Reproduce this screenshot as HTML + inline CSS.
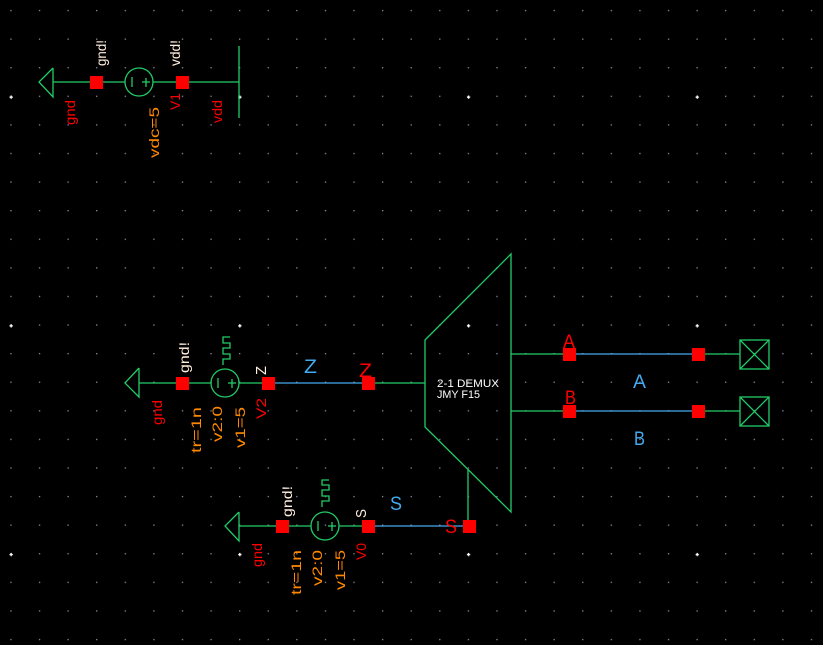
<!DOCTYPE html>
<html><head><meta charset="utf-8"><style>
html,body{margin:0;padding:0;background:#000;overflow:hidden}
svg{display:block}
text{font-family:"Liberation Sans",sans-serif}
</style></head><body>
<svg width="823" height="645" viewBox="0 0 823 645" xmlns="http://www.w3.org/2000/svg">
<defs>
<pattern id="g" x="10.3" y="9.9" width="28.59" height="28.59" patternUnits="userSpaceOnUse">
<rect x="0" y="0" width="1.3" height="1.3" fill="#8a8aaa"/>
</pattern>
<pattern id="G" x="9.5" y="95.5" width="228.7" height="228.7" patternUnits="userSpaceOnUse">
<rect x="1" y="0" width="1.3" height="3.3" fill="#fff"/>
<rect x="0" y="1" width="3.3" height="1.3" fill="#fff"/>
</pattern>
</defs>
<rect width="823" height="645" fill="#000"/>
<rect width="823" height="645" fill="url(#g)"/>
<rect width="823" height="645" fill="url(#G)"/>

<g stroke="#22cc66" stroke-width="1.3" fill="none">
<!-- top -->
<polyline points="53,68 39,82 53,97 53,68"/>
<line x1="53" y1="82" x2="125" y2="82"/>
<line x1="153" y1="82" x2="239" y2="82"/>
<line x1="239" y1="46" x2="239" y2="118"/>
<circle cx="139" cy="82" r="14"/>
<line x1="132" y1="77" x2="132" y2="87"/>
<line x1="146" y1="78" x2="146" y2="87"/>
<line x1="142" y1="82" x2="150" y2="82"/>
<!-- middle -->
<polyline points="139,368 125,383 139,397 139,368"/>
<line x1="139" y1="383" x2="211" y2="383"/>
<line x1="239" y1="383" x2="262" y2="383"/>
<line x1="375" y1="383" x2="425" y2="383"/>
<circle cx="225" cy="383" r="14"/>
<line x1="218" y1="378" x2="218" y2="388"/>
<line x1="232" y1="379" x2="232" y2="388"/>
<line x1="228" y1="383" x2="236" y2="383"/>
<path d="M223,365 V359 H230 V354 H223 V348 H230 V343 H223 V337 H230"/>
<!-- S -->
<polyline points="239,512 225,526 239,541 239,512"/>
<line x1="239" y1="526" x2="311" y2="526"/>
<line x1="339" y1="526" x2="362" y2="526"/>
<line x1="468" y1="470" x2="468" y2="520"/>
<circle cx="325" cy="526" r="14"/>
<line x1="318" y1="521" x2="318" y2="531"/>
<line x1="332" y1="522" x2="332" y2="531"/>
<line x1="328" y1="526" x2="336" y2="526"/>
<path d="M322,507 V501 H329 V496 H322 V490 H329 V485 H322 V480 H329"/>
<!-- demux -->
<polygon points="425,340 511,254 511,512 425,427"/>
<line x1="511" y1="354" x2="563" y2="354"/>
<line x1="704" y1="354" x2="740" y2="354"/>
<line x1="511" y1="411" x2="563" y2="411"/>
<line x1="704" y1="411" x2="740" y2="411"/>
<rect x="740" y="340" width="29" height="29"/>
<line x1="740" y1="340" x2="769" y2="369"/><line x1="769" y1="340" x2="740" y2="369"/>
<rect x="740" y="397" width="29" height="29"/>
<line x1="740" y1="397" x2="769" y2="426"/><line x1="769" y1="397" x2="740" y2="426"/>
</g>
<g stroke="#44aaee" stroke-width="1.3">
<line x1="275" y1="383" x2="362" y2="383"/>
<line x1="375" y1="526" x2="463" y2="526"/>
<line x1="575" y1="354" x2="692" y2="354"/>
<line x1="575" y1="411" x2="692" y2="411"/>
</g>
<g fill="#ff0000">
<rect x="90" y="76" width="13" height="13"/><rect x="176" y="76" width="13" height="13"/>
<rect x="176" y="377" width="13" height="13"/><rect x="262" y="377" width="13" height="13"/><rect x="362" y="377" width="13" height="13"/>
<rect x="276" y="520" width="13" height="13"/><rect x="362" y="520" width="13" height="13"/><rect x="463" y="520" width="13" height="13"/>
<rect x="563" y="348" width="13" height="13"/><rect x="692" y="348" width="13" height="13"/>
<rect x="563" y="405" width="13" height="13"/><rect x="692" y="405" width="13" height="13"/>
</g>

<g font-size="14">
<text fill="#ffeedd" transform="translate(106,66) rotate(-90)" textLength="26" lengthAdjust="spacingAndGlyphs">gnd!</text>
<text fill="#ffeedd" transform="translate(180,66) rotate(-90)" textLength="26" lengthAdjust="spacingAndGlyphs">vdd!</text>
<text fill="#ff0000" transform="translate(75,125) rotate(-90)" textLength="25" lengthAdjust="spacingAndGlyphs">gnd</text>
<text fill="#ff8800" transform="translate(159,158) rotate(-90)" textLength="51" lengthAdjust="spacingAndGlyphs">vdc=5</text>
<text fill="#ff0000" transform="translate(180,110) rotate(-90)" textLength="17" lengthAdjust="spacingAndGlyphs">V1</text>
<text fill="#ff0000" transform="translate(222,123) rotate(-90)" textLength="23" lengthAdjust="spacingAndGlyphs">vdd</text>
<text fill="#ffeedd" transform="translate(189,373) rotate(-90)" textLength="31" lengthAdjust="spacingAndGlyphs">gnd!</text>
<text fill="#ffeedd" transform="translate(266,375) rotate(-90)" font-size="15" textLength="9" lengthAdjust="spacingAndGlyphs">Z</text>
<text fill="#44aaee" x="304" y="373" font-size="19" textLength="13" lengthAdjust="spacingAndGlyphs">Z</text>
<text fill="#ff0000" x="359" y="377" font-size="19" textLength="13" lengthAdjust="spacingAndGlyphs">Z</text>
<text fill="#ff0000" transform="translate(162,425) rotate(-90)" textLength="25" lengthAdjust="spacingAndGlyphs">gnd</text>
<text fill="#ff8800" transform="translate(201,453) rotate(-90)" textLength="46" lengthAdjust="spacingAndGlyphs">tr=1n</text>
<text fill="#ff8800" transform="translate(222,442) rotate(-90)" textLength="36" lengthAdjust="spacingAndGlyphs">v2:0</text>
<text fill="#ff8800" transform="translate(245,448) rotate(-90)" textLength="41" lengthAdjust="spacingAndGlyphs">v1=5</text>
<text fill="#ff0000" transform="translate(266,419) rotate(-90)" textLength="21" lengthAdjust="spacingAndGlyphs">V2</text>
<text fill="#ffeedd" transform="translate(292,517) rotate(-90)" textLength="31" lengthAdjust="spacingAndGlyphs">gnd!</text>
<text fill="#ffeedd" transform="translate(366,518) rotate(-90)" font-size="15" textLength="9" lengthAdjust="spacingAndGlyphs">S</text>
<text fill="#44aaee" x="390" y="510" font-size="19" textLength="12" lengthAdjust="spacingAndGlyphs">S</text>
<text fill="#ff0000" x="445" y="533" font-size="19" textLength="12" lengthAdjust="spacingAndGlyphs">S</text>
<text fill="#ff0000" transform="translate(262,567) rotate(-90)" textLength="24" lengthAdjust="spacingAndGlyphs">gnd</text>
<text fill="#ff8800" transform="translate(301,595) rotate(-90)" textLength="45" lengthAdjust="spacingAndGlyphs">tr=1n</text>
<text fill="#ff8800" transform="translate(322,586) rotate(-90)" textLength="36" lengthAdjust="spacingAndGlyphs">v2:0</text>
<text fill="#ff8800" transform="translate(345,590) rotate(-90)" textLength="40" lengthAdjust="spacingAndGlyphs">v1=5</text>
<text fill="#ff0000" transform="translate(366,560) rotate(-90)" textLength="17" lengthAdjust="spacingAndGlyphs">V0</text>
<text fill="#ffffff" x="437" y="387" font-size="11" textLength="62" lengthAdjust="spacingAndGlyphs">2-1 DEMUX</text>
<text fill="#ffffff" x="437" y="398" font-size="11" textLength="43" lengthAdjust="spacingAndGlyphs">JMY F15</text>
<text fill="#ff0000" x="563" y="348" font-size="19" textLength="12" lengthAdjust="spacingAndGlyphs">A</text>
<text fill="#ff0000" x="565" y="404" font-size="19" textLength="11" lengthAdjust="spacingAndGlyphs">B</text>
<text fill="#44aaee" x="633" y="388" font-size="19" textLength="13" lengthAdjust="spacingAndGlyphs">A</text>
<text fill="#44aaee" x="634" y="445" font-size="19" textLength="11" lengthAdjust="spacingAndGlyphs">B</text>
</g>
</svg>
</body></html>
